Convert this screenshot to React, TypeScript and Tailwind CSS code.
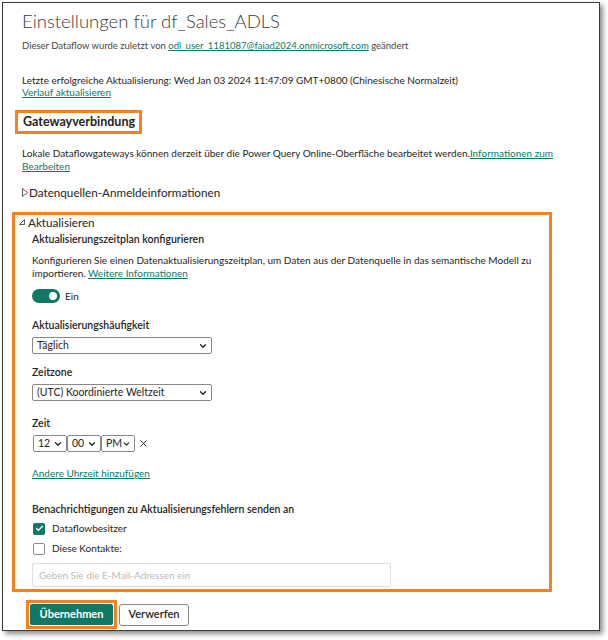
import { Check, ChevronDown, X } from 'lucide-react'

const font = { fontFamily: 'Lato, "Noto Sans", sans-serif' }

function FakeSelect({ value, width }: { value: string; width: string }) {
  return (
    <div
      className={`flex h-[17px] items-center justify-between rounded-[2px] border border-[#8a8886] bg-white pl-[4px] pr-[3px] text-[10.5px] text-[#252423] ${width}`}
    >
      <span className="leading-none">{value}</span>
      <ChevronDown size={10} strokeWidth={3.2} className="text-[#252423]" />
    </div>
  )
}

function Label({ children, className = '' }: { children: React.ReactNode; className?: string }) {
  return (
    <p className={`text-[10.5px] font-semibold leading-[13px] text-[#252423] ${className}`}>{children}</p>
  )
}

export default function App() {
  return (
    <div className="h-[640px] w-[608px] bg-white p-[2px]" style={font}>
      <div className="h-[629px] w-[598px] border border-[#3b3b3b] bg-white shadow-[3px_3px_5px_rgba(0,0,0,0.45)]">
        <div className="px-[19px]">
          <h1 className="mt-[6px] text-[18.5px] font-light leading-[24px] text-[#3b3a39]">
            Einstellungen für df_Sales_ADLS
          </h1>
          <p className="mt-[7px] text-[9.5px] leading-[12px] text-[#484644]">
            Dieser Dataflow wurde zuletzt von{' '}
            <span className="text-[#117865] underline">odl_user_1181087@faiad2024.onmicrosoft.com</span>{' '}
            geändert
          </p>
          <p className="mt-[22px] text-[10px] leading-[12px] text-[#252423]">
            Letzte erfolgreiche Aktualisierung: Wed Jan 03 2024 11:47:09 GMT+0800 (Chinesische Normalzeit)
          </p>
          <p className="text-[10px] leading-[12px] text-[#117865] underline">Verlauf aktualisieren</p>

          <div className="mt-[12px] ml-[-7px] flex w-fit border-[3px] border-[#f7811f] pl-[5px] pr-[4px]">
            <span className="text-[12.5px] font-bold leading-[18px] text-[#252423]">Gatewayverbindung</span>
          </div>

          <p className="mt-[13px] text-[10px] leading-[13px] text-[#252423]">
            Lokale Dataflowgateways können derzeit über die Power Query Online-Oberfläche bearbeitet werden.
            <span className="text-[#117865] underline">Informationen zum Bearbeiten</span>
          </p>

          <div className="mt-[11px] flex items-center gap-[1px] text-[11.7px] leading-[16px] text-[#252423]">
            <svg width="6" height="9" viewBox="0 0 6 9">
              <path d="M0.5 0.5 L5.5 4.5 L0.5 8.5 Z" fill="none" stroke="#605e5c" strokeWidth="1" />
            </svg>
            <span>Datenquellen-Anmeldeinformationen</span>
          </div>
        </div>

        <div className="mt-[12px] ml-[9px] w-[540px] border-[3px] border-[#f7811f] pb-[2px]">
          <div className="flex items-center gap-[3px] pl-[4px] text-[11.7px] leading-[14px] text-[#252423]">
            <svg width="6" height="6" viewBox="0 0 6 6">
              <path d="M5.5 0.5 L5.5 5.5 L0.5 5.5 Z" fill="none" stroke="#605e5c" strokeWidth="1" />
            </svg>
            <span>Aktualisieren</span>
          </div>
          <div className="pl-[17px]">
            <Label className="mt-[4px]">Aktualisierungszeitplan konfigurieren</Label>
            <p className="mt-[8px] pr-[4px] text-[10px] leading-[13px] text-[#252423]">
              Konfigurieren Sie einen Datenaktualisierungszeitplan, um Daten aus der Datenquelle in das semantische
              Modell zu importieren. <span className="text-[#117865] underline">Weitere Informationen</span>
            </p>
            <div className="mt-[9px] flex items-center gap-[5px]">
              <div className="flex h-[14px] w-[28px] items-center justify-end rounded-full bg-[#117865] pr-[3px]">
                <div className="h-[8px] w-[8px] rounded-full bg-white" />
              </div>
              <span className="text-[10px] leading-[13px] text-[#252423]">Ein</span>
            </div>

            <Label className="mt-[16px]">Aktualisierungshäufigkeit</Label>
            <div className="mt-[5px]">
              <FakeSelect value="Täglich" width="w-[180px]" />
            </div>

            <Label className="mt-[12px]">Zeitzone</Label>
            <div className="mt-[5px]">
              <FakeSelect value="(UTC) Koordinierte Weltzeit" width="w-[180px]" />
            </div>

            <Label className="mt-[16px]">Zeit</Label>
            <div className="mt-[5px] flex items-center pl-px">
              <FakeSelect value="12" width="w-[34px]" />
              <FakeSelect value="00" width="w-[34px]" />
              <FakeSelect value="PM" width="w-[34px]" />
              <X size={11} strokeWidth={2} className="ml-[3px] text-[#252423]" />
            </div>

            <p className="mt-[15px] text-[10px] leading-[13px] text-[#117865] underline">
              Andere Uhrzeit hinzufügen
            </p>

            <Label className="mt-[23px]">Benachrichtigungen zu Aktualisierungsfehlern senden an</Label>
            <div className="mt-[6px] flex items-center gap-[7px] pl-px">
              <div className="flex h-[12px] w-[12px] items-center justify-center rounded-[2px] bg-[#117865]">
                <Check size={9} strokeWidth={3.5} className="text-white" />
              </div>
              <span className="text-[10px] leading-[13px] text-[#252423]">Dataflowbesitzer</span>
            </div>
            <div className="mt-[7px] flex items-center gap-[7px] pl-px">
              <div className="h-[12px] w-[12px] rounded-[2px] border border-[#8a8886] bg-white" />
              <span className="text-[10px] leading-[13px] text-[#252423]">Diese Kontakte:</span>
            </div>
            <div className="mt-[8px] flex h-[24px] w-[359px] items-center rounded-[2px] border border-[#e1dfdd] pl-[6px] text-[10px] text-[#bebbb8]">
              Geben Sie die E-Mail-Adressen ein
            </div>
          </div>
        </div>

        <div className="mt-[8px] ml-[23px] flex items-center gap-[2px]">
          <div className="border-[3px] border-[#f7811f] p-[1px]">
            <div className="flex h-[21px] w-[83px] items-center justify-center rounded-[2px] bg-[#117865] text-[11px] font-bold text-white">
              Übernehmen
            </div>
          </div>
          <div className="flex h-[22px] w-[70px] items-center justify-center rounded-[3px] border border-[#8a8886] bg-white text-[11px] font-semibold text-[#252423]">
            Verwerfen
          </div>
        </div>
      </div>
    </div>
  )
}
